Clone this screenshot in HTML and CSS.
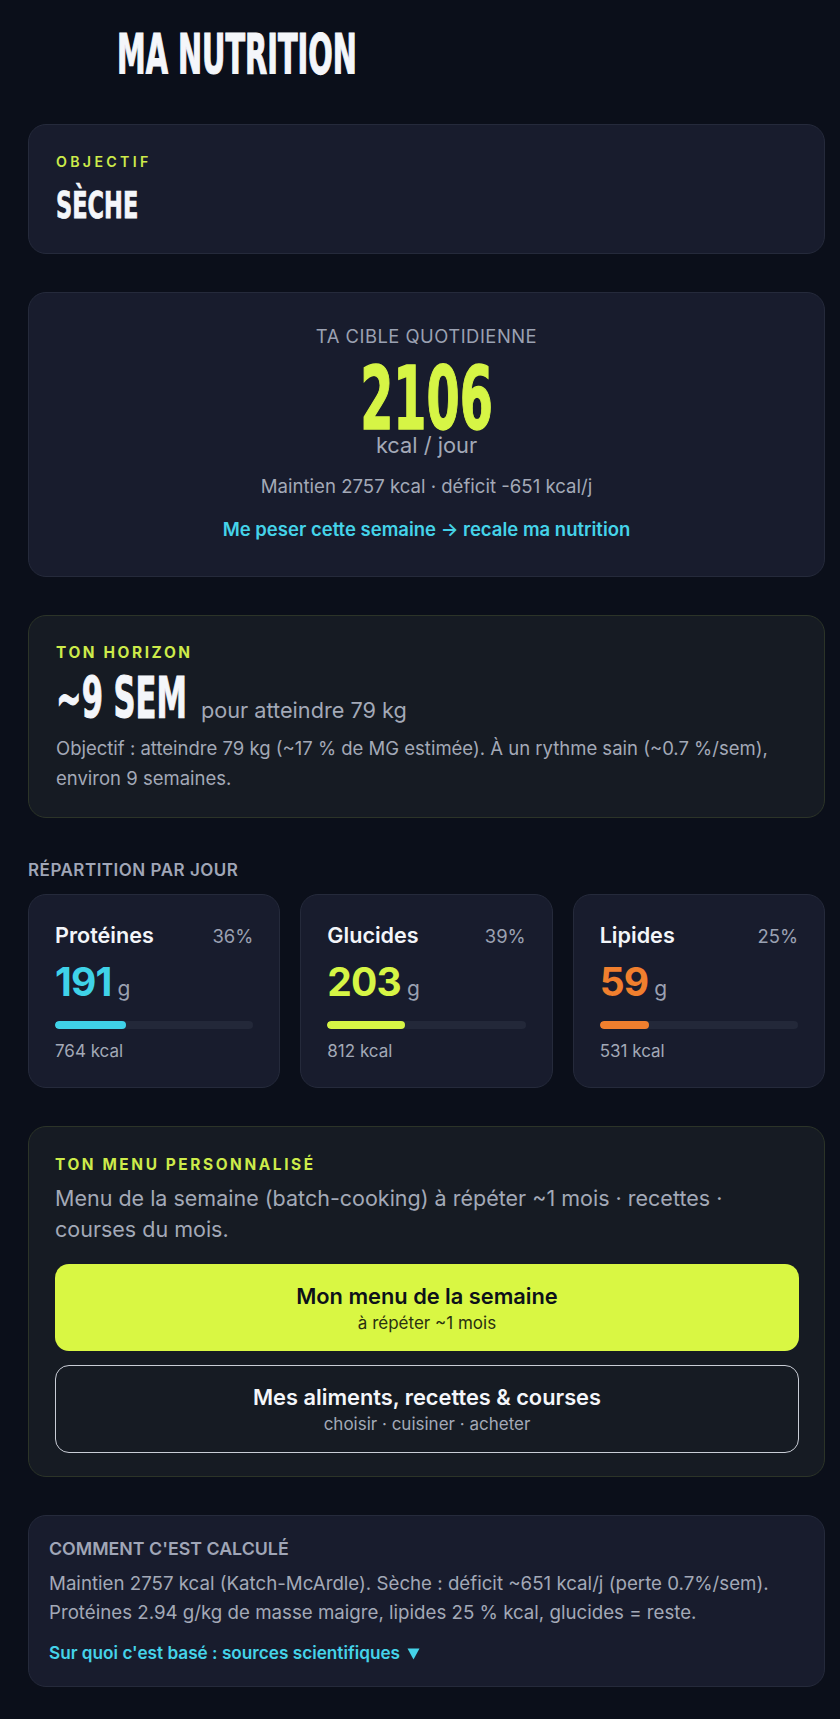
FILE: index.html
```html
<!DOCTYPE html>
<html lang="fr">
<head>
<meta charset="utf-8">
<title>Ma nutrition</title>
<link rel="stylesheet" href="styles.css">
</head>
<body>
<main class="page">
  <header class="top">
    <h1 class="title"><span class="display title-text">MA NUTRITION</span></h1>
  </header>

  <section class="card goal">
    <div class="eyebrow eyebrow-wide">OBJECTIF</div>
    <div class="goal-value"><span class="display goal-text">SÈCHE</span></div>
  </section>

  <section class="card target">
    <div class="target-label">TA CIBLE QUOTIDIENNE</div>
    <div class="target-num"><span class="display kcal-text">2106</span></div>
    <div class="target-unit">kcal / jour</div>
    <div class="target-meta">Maintien 2757 kcal · déficit -651 kcal/j</div>
    <a class="link target-link" href="#">Me peser cette semaine → recale ma nutrition</a>
  </section>

  <section class="card card-alt horizon">
    <div class="eyebrow">TON HORIZON</div>
    <div class="horizon-row"><span class="display horizon-text">~9 SEM</span><span class="horizon-unit">pour atteindre 79 kg</span></div>
    <p class="horizon-desc">Objectif : atteindre 79 kg (~17 % de MG estimée). À un rythme sain (~0.7 %/sem), environ 9 semaines.</p>
  </section>

  <section class="macros-section">
    <h2 class="section-label">RÉPARTITION PAR JOUR</h2>
    <div class="macros">
      <div class="card macro">
        <div class="macro-head"><span class="macro-name">Protéines</span><span class="macro-pct">36%</span></div>
        <div class="macro-amount"><span class="macro-num num-cyan">191</span><span class="macro-g">g</span></div>
        <div class="bar"><div class="bar-fill fill-cyan" style="width:36%"></div></div>
        <div class="macro-kcal">764 kcal</div>
      </div>
      <div class="card macro">
        <div class="macro-head"><span class="macro-name">Glucides</span><span class="macro-pct">39%</span></div>
        <div class="macro-amount"><span class="macro-num num-lime">203</span><span class="macro-g">g</span></div>
        <div class="bar"><div class="bar-fill fill-lime" style="width:39%"></div></div>
        <div class="macro-kcal">812 kcal</div>
      </div>
      <div class="card macro">
        <div class="macro-head"><span class="macro-name">Lipides</span><span class="macro-pct">25%</span></div>
        <div class="macro-amount"><span class="macro-num num-orange">59</span><span class="macro-g">g</span></div>
        <div class="bar"><div class="bar-fill fill-orange" style="width:25%"></div></div>
        <div class="macro-kcal">531 kcal</div>
      </div>
    </div>
  </section>

  <section class="card card-alt menu">
    <div class="eyebrow">TON MENU PERSONNALISÉ</div>
    <p class="menu-desc">Menu de la semaine (batch-cooking) à répéter ~1 mois · recettes · courses du mois.</p>
    <a class="btn btn-primary" href="#">
      <span class="btn-title">Mon menu de la semaine</span>
      <span class="btn-sub">à répéter ~1 mois</span>
    </a>
    <a class="btn btn-outline" href="#">
      <span class="btn-title">Mes aliments, recettes &amp; courses</span>
      <span class="btn-sub">choisir · cuisiner · acheter</span>
    </a>
  </section>

  <section class="card calc">
    <h3 class="calc-label">COMMENT C'EST CALCULÉ</h3>
    <p class="calc-text">Maintien 2757 kcal (Katch-McArdle). Sèche : déficit ~651 kcal/j (perte 0.7%/sem). Protéines 2.94 g/kg de masse maigre, lipides 25 % kcal, glucides = reste.</p>
    <a class="link calc-link" href="#">Sur quoi c'est basé : sources scientifiques<svg class="caret" viewBox="0 0 13 12" aria-hidden="true"><path d="M0.5 0.5H12.5L6.5 11.5Z"/></svg></a>
  </section>
</main>
</body>
</html>
```
FILE: styles.css
```css
* { box-sizing: border-box; }

html, body { height: auto; }

body {
  margin: 0;
  background: #0b0f1a;
  color: #f3f5f9;
  font-family: Inter, "Noto Sans", "Liberation Sans", sans-serif;
}

.page {
  display: flex;
  flex-direction: column;
  gap: 38px;
  padding: 0 15px 29px 28px;
}

/* condensed display type */
.display {
  display: inline-block;
  font-family: "DejaVu Sans Condensed", "DejaVu Sans", sans-serif;
  font-stretch: condensed;
  font-weight: 700;
  line-height: 1;
  white-space: nowrap;
  vertical-align: baseline;
  -webkit-text-stroke: 0.5px currentColor;
}

.top {
  padding: 46px 0 8px 89px;
}

.title {
  margin: 0;
  font-size: 32px;
  line-height: 32px;
  height: 32px;
}

.title-text {
  height: 28px;
  color: #f4f6fa;
  transform-origin: 0 27px;
  transform: scaleY(1.73);
  -webkit-text-stroke: 0.7px currentColor;
}

.card {
  background: #181c2d;
  border: 1px solid #252a3b;
  border-radius: 18px;
}

.card-alt {
  background: #161b23;
  border-color: #2c3428;
}

.eyebrow {
  color: #cdeb4a;
  font-size: 15.4px;
  line-height: 18px;
  font-weight: 700;
  letter-spacing: 2.6px;
}

.eyebrow-wide {
  font-size: 14.2px;
  line-height: 16px;
  font-weight: 600;
  letter-spacing: 3.3px;
}

/* goal */
.goal {
  padding: 29px 27px 34px;
}

.goal-value {
  margin-top: 24px;
  height: 25px;
  font-size: 25px;
}

.goal-text {
  height: 22px;
  color: #f4f6fa;
  transform-origin: 0 21px;
  transform: scaleY(1.5);
}

/* target */
.target {
  padding: 33px 27px 36px;
  display: flex;
  flex-direction: column;
  align-items: center;
  text-align: center;
}

.target-label {
  color: #9ba1b2;
  font-size: 18.4px;
  line-height: 20px;
  letter-spacing: 0.5px;
}

.target-num {
  margin-top: 32px;
  height: 53px;
  font-size: 53px;
}

.kcal-text {
  line-height: 46px;
  height: 46px;
  color: #d6f545;
  transform-origin: 50% 41px;
  transform: scaleY(1.66);
  -webkit-text-stroke: 0.8px currentColor;
}

.target-unit {
  margin-top: 2px;
  color: #a3a9b7;
  font-size: 21.8px;
  line-height: 24px;
}

.target-meta {
  margin-top: 18px;
  color: #a3a9b7;
  font-size: 18.6px;
  line-height: 22px;
}

.link {
  color: #45d3e9;
  font-weight: 600;
  text-decoration: none;
}

.target-link {
  margin-top: 21px;
  font-size: 18.5px;
  line-height: 22px;
}

/* horizon */
.horizon {
  padding: 28px 27px 24px;
}

.horizon-row {
  margin-top: 27px;
  font-size: 21.7px;
  line-height: 34px;
  height: 38px;
}

.horizon-text {
  height: 30px;
  font-size: 34px;
  color: #f4f6fa;
  transform-origin: 0 29px;
  transform: scaleY(1.65);
  -webkit-text-stroke: 0.6px currentColor;
}

.horizon-unit {
  margin-left: 14px;
  color: #a3a9b7;
}

.horizon-desc {
  margin: 6px 0 0;
  color: #a3a9b7;
  font-size: 18.5px;
  line-height: 30px;
}

/* macros */
.macros-section {
  margin-top: 5px;
}

.section-label {
  margin: 0;
  color: #a0a6b7;
  font-size: 17px;
  line-height: 18px;
  font-weight: 600;
  letter-spacing: 0.5px;
}

.macros {
  margin-top: 15px;
  display: grid;
  grid-template-columns: repeat(3, 1fr);
  gap: 20px;
}

.macro {
  padding: 28px 26px 26px;
}

.macro-head {
  display: flex;
  justify-content: space-between;
  align-items: baseline;
  height: 24px;
}

.macro-name {
  font-size: 21.6px;
  line-height: 24px;
  font-weight: 600;
  color: #f3f5f9;
}

.macro-pct {
  font-size: 18.4px;
  line-height: 24px;
  color: #9ba1b2;
}

.macro-amount {
  margin-top: 13px;
  display: flex;
  align-items: baseline;
  gap: 6px;
  height: 44px;
}

.macro-num {
  font-size: 39px;
  line-height: 44px;
  font-weight: 700;
  letter-spacing: -0.8px;
}

.macro-g {
  font-size: 21px;
  line-height: 24px;
  color: #9ba1b2;
}

.num-cyan { color: #3fd2e8; }
.num-lime { color: #d6f545; }
.num-orange { color: #f07f2e; }

.bar {
  margin-top: 17px;
  height: 8px;
  border-radius: 4px;
  background: #232839;
  overflow: hidden;
}

.bar-fill {
  height: 100%;
  border-radius: 4px;
}

.fill-cyan { background: #3fd2e8; }
.fill-lime { background: #d6f545; }
.fill-orange { background: #f07f2e; }

.macro-kcal {
  margin-top: 12px;
  font-size: 17px;
  line-height: 20px;
  color: #a3a9b7;
}

/* menu */
.menu {
  padding: 29px 25px 23px 26px;
  display: flex;
  flex-direction: column;
}

.menu-desc {
  margin: 9px 0 0;
  color: #a3a9b7;
  font-size: 21.5px;
  line-height: 31px;
}

.btn {
  display: flex;
  flex-direction: column;
  align-items: center;
  text-decoration: none;
  border-radius: 14px;
}

.btn-primary {
  margin-top: 19px;
  height: 87px;
  padding-top: 20px;
  background: #d9f743;
  color: #0d111a;
}

.btn-outline {
  margin-top: 14px;
  height: 88px;
  padding-top: 19px;
  border: 1.5px solid #c9cdd6;
  color: #f4f6fa;
}

.btn-title {
  font-size: 21.8px;
  line-height: 24px;
  font-weight: 600;
}

.btn-sub {
  margin-top: 5px;
  font-size: 17px;
  line-height: 20px;
}

.btn-primary .btn-sub { color: #2a3110; }
.btn-outline .btn-sub { color: #a3a9b7; }

/* calc */
.calc {
  display: flex;
  flex-direction: column;
  align-items: flex-start;
  height: 172px;
  padding: 23px 20px 0;
}

.calc-label {
  margin: 0;
  color: #a0a6b7;
  font-size: 17.8px;
  line-height: 20px;
  font-weight: 600;
}

.calc-text {
  margin: 10px 0 0;
  color: #a3a9b7;
  font-size: 18.7px;
  line-height: 29px;
}

.calc-link {
  display: block;
  margin-top: 16px;
  font-size: 17.2px;
  line-height: 20px;
  height: 20px;
}

.caret {
  width: 13px;
  height: 12px;
  margin-left: 7px;
  vertical-align: -1px;
  fill: currentColor;
}
```
